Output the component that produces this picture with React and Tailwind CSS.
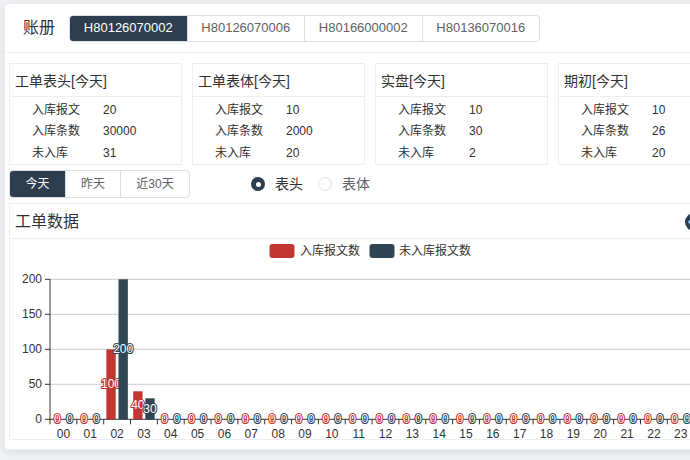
import React from "react";

const tabs = ["H80126070002", "H80126070006", "H80166000002", "H80136070016"];

const cards = [
  { title: "工单表头[今天]", rows: [["入库报文", "20"], ["入库条数", "30000"], ["未入库", "31"]] },
  { title: "工单表体[今天]", rows: [["入库报文", "10"], ["入库条数", "2000"], ["未入库", "20"]] },
  { title: "实盘[今天]", rows: [["入库报文", "10"], ["入库条数", "30"], ["未入库", "2"]] },
  { title: "期初[今天]", rows: [["入库报文", "10"], ["入库条数", "26"], ["未入库", "20"]] },
];

const hours = Array.from({ length: 24 }, (_, i) => String(i).padStart(2, "0"));
const inData = hours.map((_, i) => (i === 2 ? 100 : i === 3 ? 40 : 0));
const outData = hours.map((_, i) => (i === 2 ? 200 : i === 3 ? 30 : 0));

// chart geometry in page coords (echarts-ish)
const X0 = 50;
const Y0 = 419.3;
const CAT = 26.84;
const BAR = 9.34;
const GAP = 2.8;
const PX = 0.7; // px per unit
const RED = "#c23531";
const DARK = "#2f4554";

function barLabel(x, y, v, color) {
  return (
    <text
      x={x}
      y={y}
      textAnchor="middle"
      dominantBaseline="central"
      fontSize="12"
      fill="#fff"
      stroke={color}
      strokeWidth="2"
      style={{ paintOrder: "stroke" }}
    >
      {v}
    </text>
  );
}

function Chart() {
  const redX = (i) => X0 + i * CAT + (CAT - 2 * BAR - GAP) / 2;
  const darkX = (i) => redX(i) + BAR + GAP;
  return (
    <svg width="710" height="200" className="block" fontFamily="'Liberation Sans', sans-serif">
      <g transform="translate(-10 -239)">
        {/* legend */}
        <rect x="269.5" y="244" width="25" height="14" rx="3" fill={RED} />
        <text x="300" y="251" dominantBaseline="central" fontSize="12" fill="#333" fontFamily="'Liberation Sans','Noto Sans CJK SC',sans-serif">
          入库报文数
        </text>
        <rect x="369.5" y="244" width="25" height="14" rx="3" fill={DARK} />
        <text x="399" y="251" dominantBaseline="central" fontSize="12" fill="#333" fontFamily="'Liberation Sans','Noto Sans CJK SC',sans-serif">
          未入库报文数
        </text>

        {/* grid */}
        {[0, 50, 100, 150, 200].map((v) => {
          const y = Y0 - v * PX;
          return (
            <g key={v}>
              {v > 0 && <line x1={X0} x2={X0 + 24 * CAT} y1={y} y2={y} stroke="#ccc" />}
              <line x1={X0 - 5} x2={X0} y1={y} y2={y} stroke="#333" />
              <text x={X0 - 8} y={y} textAnchor="end" dominantBaseline="central" fontSize="12" fill="#333">
                {v}
              </text>
            </g>
          );
        })}
        <line x1={X0} x2={X0} y1={Y0 - 200 * PX} y2={Y0} stroke="#333" />
        <line x1={X0} x2={X0 + 24 * CAT} y1={Y0} y2={Y0} stroke="#333" />
        {Array.from({ length: 25 }, (_, i) => (
          <line key={i} x1={X0 + i * CAT} x2={X0 + i * CAT} y1={Y0} y2={Y0 + 5} stroke="#333" />
        ))}
        {hours.map((h, i) => (
          <text key={h} x={X0 + i * CAT + CAT / 2} y={433.5} textAnchor="middle" dominantBaseline="central" fontSize="12" fill="#333">
            {h}
          </text>
        ))}

        {/* 入库报文数 */}
        {inData.map((v, i) => (
          <rect key={"r" + i} x={redX(i)} y={Y0 - v * PX} width={BAR} height={v * PX} fill={RED} />
        ))}
        {inData.map((v, i) => (
          <g key={"rl" + i}>{barLabel(redX(i) + BAR / 2, Y0 - (v * PX) / 2, v, RED)}</g>
        ))}

        {/* 未入库报文数 */}
        {outData.map((v, i) => (
          <rect key={"d" + i} x={darkX(i)} y={Y0 - v * PX} width={BAR} height={v * PX} fill={DARK} />
        ))}
        {outData.map((v, i) => (
          <g key={"dl" + i}>{barLabel(darkX(i) + BAR / 2, Y0 - (v * PX) / 2, v, DARK)}</g>
        ))}
      </g>
    </svg>
  );
}

export default function App() {
  return (
    <div className="w-[690px] h-[460px] overflow-hidden bg-[#f2f3f5] pt-[3px] pl-[4px] font-['Liberation_Sans','Noto_Sans_CJK_SC',sans-serif] text-[#303133]">
      <div className="w-[730px] bg-white border border-[#ebeef5] rounded-[4px] shadow-[0_2px_12px_0_rgba(0,0,0,0.1)] pb-[9px]">
        {/* 账册 header */}
        <div className="h-[49px] flex items-center pl-[18px] border-b border-[#ebeef5]">
          <span className="text-[16px] leading-none">账册</span>
          <div className="ml-[14px] w-[471px] h-[27px] flex border border-[#dcdfe6] rounded-[4px] overflow-hidden">
            {tabs.map((t, i) => (
              <div
                key={t}
                className={
                  i === 0
                    ? "flex-1 flex items-center justify-center text-[13px] bg-[#2c3e50] text-white"
                    : "flex-1 flex items-center justify-center text-[13px] text-[#606266] border-l border-[#dcdfe6]"
                }
              >
                {t}
              </div>
            ))}
          </div>
        </div>

        <div className="pl-[4px] pt-[10px]">
          {/* 统计卡片 */}
          <div className="flex gap-[10px]">
            {cards.map((c) => (
              <div key={c.title} className="w-[173px] h-[102px] shrink-0 border border-[#ebeef5]">
                <div className="h-[33px] flex items-center pl-[5px] pt-[3px] text-[14px] border-b border-[#ebeef5]">
                  {c.title}
                </div>
                <div className="pt-[2px] pl-[22px]">
                  {c.rows.map(([k, v]) => (
                    <div key={k} className="h-[21.5px] flex items-center text-[12px]">
                      <span className="w-[71px]">{k}</span>
                      <span>{v}</span>
                    </div>
                  ))}
                </div>
              </div>
            ))}
          </div>

          {/* 时间 + 类型 */}
          <div className="mt-[5px] flex items-center">
            <div className="h-[28px] flex border border-[#dcdfe6] rounded-[4px] overflow-hidden text-[12px]">
              <div className="w-[55px] flex items-center justify-center bg-[#2c3e50] text-white">今天</div>
              <div className="w-[55px] flex items-center justify-center text-[#606266] border-l border-[#dcdfe6]">昨天</div>
              <div className="w-[69px] flex items-center justify-center text-[#606266] border-l border-[#dcdfe6]">近30天</div>
            </div>
            <div className="ml-[61px] flex items-center text-[14px]">
              <span className="w-[14px] h-[14px] rounded-full bg-[#2c3e50] flex items-center justify-center">
                <span className="w-[5px] h-[5px] rounded-full bg-white" />
              </span>
              <span className="ml-[10px]">表头</span>
              <span className="ml-[15px] w-[14px] h-[14px] rounded-full border border-[#dcdfe6] bg-white" />
              <span className="ml-[10px] text-[#606266]">表体</span>
            </div>
          </div>

          {/* 工单数据 */}
          <div className="mt-[5px] w-[712px] border border-[#ebeef5]">
            <div className="h-[35px] flex items-center justify-between pl-[5px] pr-[17px] pt-[1px] border-b border-[#ebeef5]">
              <span className="text-[16px]">工单数据</span>
              <svg width="18" height="18" viewBox="0 0 18 18">
                <circle cx="9" cy="9" r="9" fill="#2c3e50" />
                <path d="M4 9h5M6.5 6.5 4 9l2.5 2.5" stroke="#9fd3ff" strokeWidth="1.6" fill="none" />
              </svg>
            </div>
            <Chart />
          </div>
        </div>
      </div>
    </div>
  );
}
